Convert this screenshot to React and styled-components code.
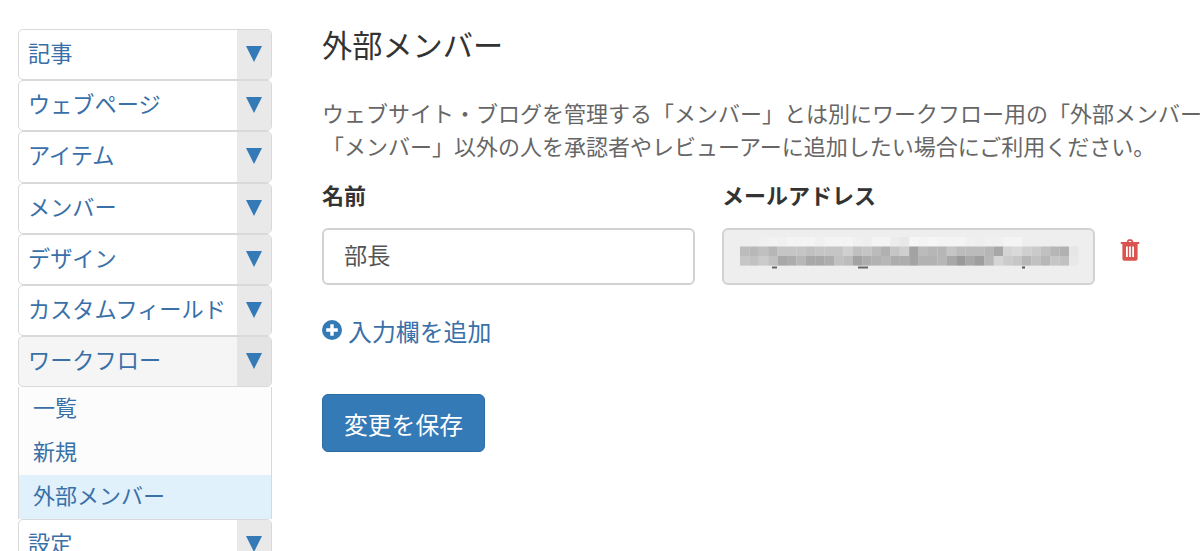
import React from "react";
import styled, { createGlobalStyle } from "styled-components";

const Global = createGlobalStyle`
  html, body { margin: 0; padding: 0; background: #fff; overflow: hidden; }
  body { font-family: "Noto Sans CJK JP", "Liberation Sans", sans-serif; color: #333; }
`;

const Page = styled.div`
  width: 1200px;
  height: 551px;
  overflow: hidden;
  display: flex;
  align-items: flex-start;
`;

const Sidebar = styled.nav`
  width: 254px;
  margin: 29px 0 0 18px;
  flex: none;
`;

const MenuHeader = styled.div`
  height: 51.2px;
  box-sizing: border-box;
  display: flex;
  border: 1px solid #d9d9d9;
  border-radius: 5px;
  background: ${p => (p.$open ? "#f5f5f5" : "#fff")};
  overflow: hidden;
`;

const MenuLabel = styled.span`
  flex: 1;
  padding-left: 9px;
  font-size: 22.2px;
  line-height: 45px;
  color: #3a70a8;
  white-space: nowrap;
`;

const Caret = styled.span`
  width: 34px;
  flex: none;
  display: flex;
  align-items: center;
  justify-content: center;
  background: ${p => (p.$open ? "#e4e4e4" : "#e9e9e9")};
`;

const CaretShape = styled.svg`
  width: 16px;
  height: 16px;
  margin-top: -1px;
  fill: #337ab7;
`;

const SubMenu = styled.div`
  box-sizing: border-box;
  height: 132px;
  border: 1px solid #d9d9d9;
  border-top: none;
  border-bottom: none;
  background: #fcfcfc;
`;

const SubItem = styled.div`
  height: 44px;
  padding-left: 14px;
  font-size: 22px;
  line-height: 38px;
  color: #3a70a8;
  background: ${p => (p.$active ? "#e1f1fb" : "transparent")};
`;

const Main = styled.main`
  margin-left: 50px;
  flex: 1;
  min-width: 0;
  padding-top: 22px;
`;

const Title = styled.h1`
  margin: 0;
  font-size: 30.2px;
  font-weight: 400;
  line-height: 44px;
  color: #333;
`;

const Description = styled.p`
  margin: 30px 0 0;
  font-size: 22px;
  line-height: 33px;
  color: #666;
  white-space: nowrap;
`;

const Fields = styled.div`
  display: flex;
  align-items: flex-start;
  margin-top: 16px;
`;

const Field = styled.div`
  width: 373px;
  margin-right: 27px;
  flex: none;
`;

const Label = styled.div`
  font-size: 22px;
  font-weight: 700;
  line-height: 32px;
  color: #333;
  margin-bottom: 18px;
`;

const InputBox = styled.div`
  box-sizing: border-box;
  height: 57px;
  border: 2px solid #d2d2d2;
  border-radius: 6px;
  background: ${p => (p.$disabled ? "#eee" : "#fff")};
  padding: ${p => (p.$disabled ? "7px 0 0 16px" : "0 0 0 20px")};
  font-size: 23.2px;
  line-height: 48px;
  color: #555;
`;

const Mosaic = styled.svg`
  display: block;
  width: 340px;
  height: 32px;
  filter: blur(0.7px);
`;

const TrashButton = styled.span`
  margin: 61px 0 0 -2px;
  display: block;
  color: #d9534f;
  line-height: 0;
`;

const AddLink = styled.div`
  display: flex;
  align-items: center;
  gap: 6px;
  margin-top: 28px;
  height: 34px;
  font-size: 23.9px;
  color: #3a70a8;
`;

const SaveButton = styled.button`
  display: block;
  margin-top: 47px;
  width: 163px;
  height: 58px;
  padding: 0;
  border: 1px solid #2e6da4;
  border-radius: 6px;
  background: #337ab7;
  color: #fff;
  font: 400 23.8px "Noto Sans CJK JP", sans-serif;
`;

const menus = ["記事", "ウェブページ", "アイテム", "メンバー", "デザイン", "カスタムフィールド"];

const row1 = [238,238,240,242,240,244,244,244,240,244,244,244,240,238,244,244,236,232,246,244,246,244,244,244,240,238,240,240,244,244,238,238,238,238,238,238];
const row2 = [188,184,192,182,197,197,197,192,197,197,197,207,192,197,187,177,197,207,162,187,182,182,197,187,187,187,182,167,212,217,207,202,192,182,177,230];
const row3 = [198,193,203,193,168,173,183,168,168,173,193,188,163,173,178,183,173,173,163,178,178,183,168,153,168,158,183,213,203,198,183,193,183,198,193,232];

function Pixels() {
  return (
    <Mosaic viewBox="0 0 340 32" aria-hidden="true">
      <rect x="32" y="29.5" width="5" height="2" fill="#666" />
      <rect x="118" y="29.5" width="10" height="2" fill="#666" />
      <rect x="282" y="29.5" width="3" height="2" fill="#555" />
      {[row1, row2, row3].map((r, y) =>
        r.map((g, x) => (
          <rect
            key={`${y}-${x}`}
            x={x * 9.4}
            y={y * 9.5}
            width="9.5"
            height="9.6"
            fill={`rgb(${g},${g},${g})`}
          />
        ))
      )}
    </Mosaic>
  );
}

function Arrow() {
  return (
    <CaretShape viewBox="0 0 16 16" aria-hidden="true">
      <path d="M0 0H16L8 16Z" />
    </CaretShape>
  );
}

function Menu({ label, open }) {
  return (
    <MenuHeader $open={open}>
      <MenuLabel>{label}</MenuLabel>
      <Caret $open={open}>
        <Arrow />
      </Caret>
    </MenuHeader>
  );
}

export default function App() {
  return (
    <Page>
      <Global />
      <Sidebar>
        {menus.map(m => (
          <Menu key={m} label={m} />
        ))}
        <Menu label="ワークフロー" open />
        <SubMenu>
          <SubItem>一覧</SubItem>
          <SubItem>新規</SubItem>
          <SubItem $active>外部メンバー</SubItem>
        </SubMenu>
        <Menu label="設定" />
      </Sidebar>
      <Main>
        <Title>外部メンバー</Title>
        <Description>
          ウェブサイト・ブログを管理する「メンバー」とは別にワークフロー用の「外部メンバー」を登録できます。
          <br />
          「メンバー」以外の人を承認者やレビューアーに追加したい場合にご利用ください。
        </Description>
        <Fields>
          <Field>
            <Label>名前</Label>
            <InputBox>部長</InputBox>
          </Field>
          <Field>
            <Label>メールアドレス</Label>
            <InputBox $disabled>
              <Pixels />
            </InputBox>
          </Field>
          <TrashButton>
            <svg width="20" height="22" viewBox="0 0 20 22" fill="currentColor" aria-hidden="true">
              <path fillRule="evenodd" d="M6.5 3 7.6 .9C7.9 .4 8.3 .2 8.8 .2h2.4c.5 0 .9.2 1.2.7L13.5 3H19.2v2H17.6V19.5c0 1.3-.9 2.3-2 2.3H4.4c-1.1 0-2-1-2-2.3V5H.8V3ZM8.5 3h3l-.5-1H9ZM6 7.5v10.5h1.8V7.5ZM9.1 7.5v10.5h1.8V7.5ZM12.2 7.5v10.5h1.8V7.5Z" />
            </svg>
          </TrashButton>
        </Fields>
        <AddLink>
          <svg width="20" height="20" viewBox="0 0 20 20" aria-hidden="true">
            <circle cx="10" cy="10" r="10" fill="#337ab7" />
            <path d="M8.3 4.2h3.4v4.1h4.1v3.4h-4.1v4.1H8.3v-4.1H4.2V8.3h4.1Z" fill="#fff" />
          </svg>
          入力欄を追加
        </AddLink>
        <SaveButton>変更を保存</SaveButton>
      </Main>
    </Page>
  );
}
